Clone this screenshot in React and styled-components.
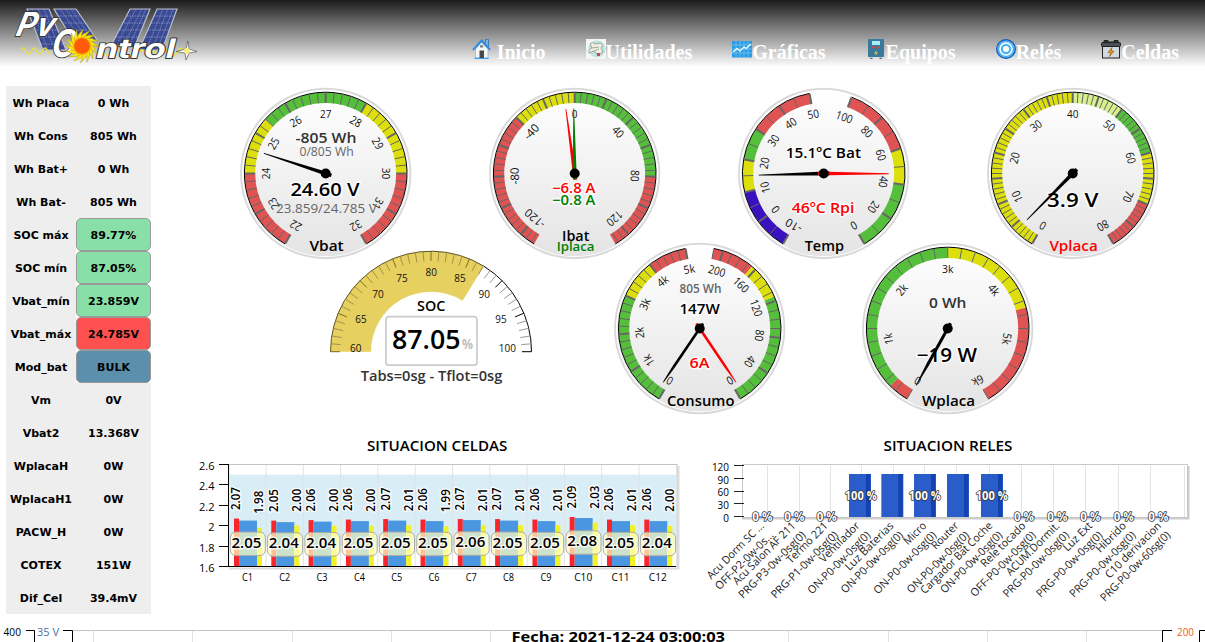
import React from "react";
import styled, { createGlobalStyle } from "styled-components";

const GlobalStyle = createGlobalStyle`
  * { box-sizing: border-box; }
  body { margin: 0; background: #fff; overflow: hidden; }
  svg { display: block; overflow: visible; }
`;

const Page = styled.div`
  width: 1205px;
  height: 642px;
  overflow: hidden;
  display: flex;
  flex-direction: column;
  background: #fff;
`;

const Header = styled.header`
  height: 67px;
  flex: none;
  display: flex;
  justify-content: space-between;
  padding-right: 26px;
  background: linear-gradient(#1c1c1c, #fff);
`;

const Nav = styled.nav`
  display: flex;
  gap: 40px;
  padding-top: 39px;
`;

const NavItem = styled.a`
  display: flex;
  align-items: flex-start;
  height: 22px;
  color: #fff;
  font: bold 20px/27px "Liberation Serif", serif;
  white-space: pre;

  svg { flex: none; }
`;

const Main = styled.main`
  height: 553px;
  flex: none;
  display: flex;
  padding: 16px 0 0 6px;
`;

const Sidebar = styled.aside`
  width: 145px;
  height: 528px;
  margin-top: 3px;
  flex: none;
`;

const StatRow = styled.div`
  display: grid;
  grid-template-columns: 70px 75px;
  height: 33px;
  font: bold 11px/35px "DejaVu Sans", sans-serif;
  text-align: center;
  color: #000;
`;

const StatLabel = styled.div`
  height: 33px;
  background: #eee;
  white-space: nowrap;
`;

const StatHolder = styled.div`
  height: 33px;
  background: ${(p) => (p.$plain ? "#eee" : "#fff")};
`;

const StatValue = styled.div`
  height: 33px;
  line-height: ${(p) => (p.$color ? "33px" : "35px")};
  border: ${(p) => (p.$color ? "1px solid #999" : "none")};
  border-radius: ${(p) => (p.$color ? "5px" : "0")};
  background: ${(p) => p.$color || "transparent"};
`;

const Content = styled.section`
  margin-left: 34px;
  width: 1020px;
`;

const GaugeRow = styled.div`
  display: grid;
  grid-template-columns: repeat(4, 249px);
  justify-items: center;
  height: 180px;
  margin-left: 16px;
`;

const LowerGaugeRow = styled.div`
  display: flex;
  gap: 68.5px;
  height: 180px;
  margin-top: -25px;
  padding-left: 136px;
`;

const ChartRow = styled.div`
  display: flex;
  margin-top: 12px;
`;

const Chart = styled.svg`
  width: ${(p) => p.$w}px;
  height: ${(p) => p.$h}px;
  flex: none;
  font-family: "Open Sans", "Noto Sans", sans-serif;
`;

const Footer = styled.footer`
  height: 22px;
  overflow: hidden;
`;

const RED = "#df5353";
const YELLOW = "#dddf0d";
const GREEN = "#55bf3b";

const polar = (r, deg) => {
  const a = (deg * Math.PI) / 180;
  return [r * Math.sin(a), -r * Math.cos(a)];
};

const arc = (r1, r2, a, b) => {
  const big = Math.abs(b - a) > 180 ? 1 : 0;
  const p = [polar(r1, a), polar(r1, b), polar(r2, b), polar(r2, a)];
  return `M${p[0]}A${r1},${r1} 0 ${big} 1 ${p[1]}L${p[2]}A${r2},${r2} 0 ${big} 0 ${p[3]}Z`;
};

const edge = (r, a, b) =>
  `M${polar(r, a)}A${r},${r} 0 ${Math.abs(b - a) > 180 ? 1 : 0} 1 ${polar(r, b)}`;

/* Text stretched between two x positions, with an optional halo. */
function Span({ x1, x2, y, size = 14.5, fill = "#000", weight = 600, halo, children }) {
  return (
    <text
      x={x1}
      y={y}
      textLength={x2 - x1}
      lengthAdjust="spacingAndGlyphs"
      fontSize={size}
      fontWeight={weight}
      fill={fill}
      stroke={halo ? "#fff" : "none"}
      strokeWidth={halo ? 3 : 0}
      strokeOpacity={0.8}
      strokeLinejoin="round"
      paintOrder="stroke"
    >
      {children}
    </text>
  );
}

function Scale({ from, to, a0, a1, bands, minor, major, labels, thin }) {
  const at = (v) => a0 + ((v - from) / (to - from)) * (a1 - a0);
  const ticks = [];
  const n = Math.round((to - from) / minor);
  const start = Math.ceil(from / minor) * minor;
  for (let i = 0; i <= n; i++) {
    const v = start + i * minor;
    if (v > to + 1e-6) break;
    const isMajor = Math.abs(v / major - Math.round(v / major)) < 1e-6;
    ticks.push({ v, isMajor });
  }
  const lo = Math.min(a0, a1);
  const hi = Math.max(a0, a1);
  return (
    <g>
      {bands.map(([s, e, c]) => (
        <path key={s} d={arc(81, 70.5, Math.min(at(s), at(e)), Math.max(at(s), at(e)))} fill={c} />
      ))}
      <path d={edge(81.3, lo, hi)} fill="none" stroke="#000" />
      {ticks.map(({ v, isMajor }) => {
        const [x1, y1] = polar(80.8, at(v));
        const [x2, y2] = polar(70.5, at(v));
        return (
          <line key={v} x1={x1} y1={y1} x2={x2} y2={y2} stroke="#666" strokeWidth={isMajor && !thin ? 2 : 1} />
        );
      })}
      {labels.map(([v, t]) => {
        const [x, y] = polar(60, at(v));
        return (
          <text
            key={v}
            transform={`translate(${x} ${y}) rotate(${at(v)})`}
            y="4"
            fontSize="11.5"
            textAnchor="middle"
            fill="#111"
            textLength={t.length * 5.7}
            lengthAdjust="spacingAndGlyphs"
          >
            {t}
          </text>
        );
      })}
    </g>
  );
}

function Needle({ angle, color = "#000", base = 5, half = 1.8 }) {
  return (
    <path
      transform={`rotate(${angle})`}
      d={`M-${half},6L-${half},-${base}L-0.4,-65L0.4,-65L${half},-${base}L${half},6Z`}
      fill={color}
    />
  );
}

function Gauge({ scales, needles, front }) {
  return (
    <Chart $w={180} $h={180}>
      <defs>
        <linearGradient id="plate" x1="0" y1="0" x2="0" y2="1">
          <stop offset="0" stopColor="#fff" />
          <stop offset="1" stopColor="#e4e4e4" />
        </linearGradient>
      </defs>
      <g transform="translate(89.7 90.5)">
        <circle r="84.7" fill="#fff" stroke="#d9d9d9" strokeWidth="1.9" />
        <circle r="82.8" fill="url(#plate)" />
        {scales.map((s) => (
          <Scale key={s.a0} {...s} />
        ))}
        {front}
        {needles.map((n) => (
          <Needle key={n.angle} {...n} />
        ))}
        <circle r="5" fill="#000" />
      </g>
    </Chart>
  );
}

const seq = (a, b, s, f = String) => {
  const out = [];
  for (let v = a; v <= b; v += s) out.push([v, f(v)]);
  return out;
};
const kilo = (v) => (v === 0 ? "0" : `${v / 1000}k`);

function Vbat() {
  return (
    <Gauge
      scales={[{
        from: 22, to: 32, a0: -150, a1: 150, minor: 0.2, major: 1, labels: seq(22, 32, 1),
        bands: [[22, 24, RED], [24, 25.4, YELLOW], [25.4, 28, GREEN], [28, 30, YELLOW], [30, 32, RED]],
      }]}
      needles={[{ angle: -72 }]}
      front={
        <>
          <Span x1={-30.3} x2={30.7} y={-31} fill="#333">-805 Wh</Span>
          <Span x1={-26.3} x2={28} y={-17.7} size={12} fill="#666" weight={500}>0/805 Wh</Span>
          <Span x1={-35.3} x2={33.7} y={22} size={18} halo>24.60 V</Span>
          <Span x1={-49.7} x2={51} y={39} size={12} fill="#666" weight={400}>23.859/24.785 V</Span>
          <Span x1={-16.3} x2={18} y={77}>Vbat</Span>
        </>
      }
    />
  );
}

function Ibat() {
  return (
    <Gauge
      scales={[{
        from: -130, to: 130, a0: -150, a1: 150, minor: 4, major: 20, labels: seq(-120, 120, 40),
        bands: [[-130, -40, RED], [-40, 0, YELLOW], [0, 80, GREEN], [80, 130, RED]],
      }]}
      needles={[{ angle: -7.8, color: "#f00" }, { angle: -0.9, color: "green" }]}
      front={
        <>
          <Span x1={-22.7} x2={20.7} y={19.7} size={14} fill="#f00" halo>−6.8 A</Span>
          <Span x1={-22.7} x2={20.7} y={31.3} size={14} fill="green" halo>−0.8 A</Span>
          <Span x1={-12.7} x2={14.7} y={67.3}>Ibat</Span>
          <Span x1={-18} x2={19.7} y={77} size={12.5} fill="green">Iplaca</Span>
        </>
      }
    />
  );
}

function Temp() {
  return (
    <Gauge
      scales={[
        {
          from: -10, to: 50, a0: -150, a1: -10, minor: 5, major: 10, labels: seq(-10, 50, 10),
          bands: [[-10, 10, "#3a11bf"], [10, 20, YELLOW], [20, 30, GREEN], [30, 50, RED]],
        },
        {
          from: 0, to: 100, a0: 150, a1: 20, minor: 10, major: 20, labels: seq(0, 100, 20),
          bands: [[0, 40, GREEN], [40, 60, YELLOW], [60, 100, RED]],
        },
      ]}
      needles={[{ angle: -91.4 }, { angle: 90.2, color: "#f00" }]}
      front={
        <>
          <Span x1={-38} x2={37.3} y={-15.3} size={15} halo>15.1ºC Bat</Span>
          <Span x1={-32} x2={30.7} y={39.7} size={15} fill="#f00" halo>46ºC Rpi</Span>
          <Span x1={-19} x2={20.3} y={77}>Temp</Span>
        </>
      }
    />
  );
}

function Vplaca() {
  return (
    <Gauge
      scales={[{
        from: 0, to: 80, a0: -150, a1: 150, minor: 1, major: 5, labels: seq(0, 80, 10),
        bands: [[0, 40, YELLOW], [40, 50, "#d5f08c"], [50, 60, GREEN], [60, 70, YELLOW], [70, 80, RED]],
      }]}
      needles={[{ angle: -135.4 }]}
      front={
        <>
          <Span x1={-25.7} x2={25.7} y={33.7} size={19} halo>3.9 V</Span>
          <Span x1={-23.3} x2={25} y={77} fill="#f00">Vplaca</Span>
        </>
      }
    />
  );
}

function Consumo() {
  return (
    <Gauge
      scales={[
        {
          from: 0, to: 5000, a0: -150, a1: -10, minor: 200, major: 1000, labels: seq(0, 5000, 1000, kilo),
          bands: [[0, 3000, GREEN], [3000, 4000, YELLOW], [4000, 5000, RED]],
        },
        {
          from: 0, to: 210, a0: 150, a1: 10, minor: 10, major: 40, labels: seq(0, 200, 40),
          bands: [[0, 125, GREEN], [125, 165, YELLOW], [165, 210, RED]],
        },
      ]}
      needles={[{ angle: 146, color: "#f00", base: 46, half: 1.3 }, { angle: -145.9, base: 46, half: 1.3 }]}
      front={
        <>
          <Span x1={-20.3} x2={21.7} y={-35.3} size={12} fill="#666">805 Wh</Span>
          <Span x1={-20.3} x2={20} y={-15} halo>147W</Span>
          <Span x1={-10.3} x2={9.7} y={39.7} fill="#f00" halo>6A</Span>
          <Span x1={-32.7} x2={34.7} y={77}>Consumo</Span>
        </>
      }
    />
  );
}

function Wplaca() {
  return (
    <Gauge
      scales={[{
        from: 0, to: 6000, a0: -150, a1: 150, minor: 200, major: 1000, thin: true, labels: seq(0, 6000, 1000, kilo),
        bands: [[0, 300, RED], [300, 3000, GREEN], [3000, 4500, YELLOW], [4500, 6000, RED]],
      }]}
      needles={[{ angle: -151, base: 40, half: 1.5 }]}
      front={
        <>
          <Span x1={-18.7} x2={18.7} y={-21} fill="#333">0 Wh</Span>
          <Span x1={-31} x2={29.3} y={33.7} size={19} halo>−19 W</Span>
          <Span x1={-25.7} x2={27.3} y={77}>Wplaca</Span>
        </>
      }
    />
  );
}

const SOC_LABELS = [
  [60, -75.3, -3.7], [65, -70, -32.7], [70, -53, -57.7], [75, -29, -73.3], [80, 0.3, -79.3],
  [85, 29, -73.3], [90, 53.3, -57.7], [95, 70, -32.7], [100, 76.3, -3.7],
];

function Soc() {
  const level = 31.7;
  return (
    <Chart $w={220} $h={180}>
      <g transform="translate(110 113.7)">
        <path d={arc(100.5, 60, -90, level)} fill="#e6d05f" />
        <path d={edge(100.5, -90, level)} fill="none" stroke="#5c5326" />
        <path d={edge(100.5, level, 90)} fill="none" stroke="#000" />
        {Array.from({ length: 41 }, (_, i) => {
          const a = -90 + i * 4.5;
          const major = i % 5 === 0;
          const [x1, y1] = polar(100.5, a);
          const [x2, y2] = polar(major ? 91 : 90.5, a);
          const onBand = a < level;
          const color = onBand ? (major ? "#7a6c20" : "#a2934a") : major ? "#000" : "#999";
          return <line key={i} x1={x1} y1={y1} x2={x2} y2={y2} stroke={color} />;
        })}
        {SOC_LABELS.map(([v, x, y]) => (
          <text key={v} x={x} y={y + 4} fontSize="11.5" textAnchor="middle" fill="#111"
            textLength={String(v).length * 5.7} lengthAdjust="spacingAndGlyphs">{v}</text>
        ))}
        <Span x1={-14} x2={14.3} y={-41}>SOC</Span>
        <rect x="-45" y="-35" width="91" height="48.5" rx="3" fill="#fff" stroke="#ccc" strokeWidth="1.7" />
        <Span x1={-39} x2={29.5} y={-2.7} size={26.5}>87.05</Span>
        <Span x1={30.7} x2={42} y={-2.7} size={15} weight={700} fill="#c0c0c0">%</Span>
        <Span x1={-70.3} x2={71.3} y={29.3} size={14} fill="#333">Tabs=0sg - Tflot=0sg</Span>
      </g>
    </Chart>
  );
}

/* bar heights (max, mean, min), then the printed mean, max and min where they are rounded apart */
const CELLS = [
  [2.07, 2.05, 1.98], [2.05, 2.035, 2.0, 2.04], [2.055, 2.04, 2.0, 2.04, 2.06], [2.06, 2.045, 2.0, 2.05],
  [2.065, 2.05, 2.005, 2.05, 2.07, 2.01], [2.06, 2.045, 1.995, 2.05, 2.06, 1.99], [2.065, 2.055, 2.005, 2.06, 2.07, 2.01],
  [2.065, 2.05, 2.005, 2.05, 2.07, 2.01], [2.06, 2.045, 2.005, 2.05, 2.06, 2.01], [2.085, 2.075, 2.03, 2.08, 2.09, 2.03],
  [2.06, 2.045, 2.005, 2.05, 2.06, 2.01], [2.06, 2.045, 2.0, 2.04],
];

function Celdas() {
  const L = 43.7;
  const B = 136.5;
  const step = 37.3;
  const y = (v) => B - (v - 1.6) * 102;
  const label = (x, yy, t) => (
    <text transform={`translate(${x} ${yy}) rotate(-90)`} fontSize="12.5" textLength="23" lengthAdjust="spacingAndGlyphs"
      stroke="#fff" strokeWidth="3" strokeOpacity="0.85" paintOrder="stroke" strokeLinejoin="round" fontWeight="600">{t}</text>
  );
  return (
    <Chart $w={510} $h={172}>
      <Span x1={182} x2={322.3} y={20.7} size={14}>SITUACION CELDAS</Span>
      <path d="M493.5,36V138.5H44" fill="none" stroke="#ddd" strokeWidth="2" />
      <rect x={L} y="34.5" width="448.3" height="102" fill="#fff" stroke="#c4c4c4" />
      <rect x={L} y={y(2.5)} width="447.5" height={y(1.8) - y(2.5)} fill="#d9edf7" />
      {Array.from({ length: 11 }, (_, i) => (
        <line key={i} x1={L + step * (i + 1)} x2={L + step * (i + 1)} y1="35" y2="136" stroke="#e2e2e2" />
      ))}
      {CELLS.map(([hi, mid, lo], i) => {
        const x = 49 + i * step;
        return (
          <g key={i}>
            <rect x={x} y={y(hi)} width="5" height={B - y(hi)} fill="#f8262b" />
            <rect x={x + 5} y={y(mid)} width="18" height={B - y(mid)} fill="#4a96e0" />
            <rect x={x + 23} y={y(lo)} width="5" height={B - y(lo)} fill="#f3f025" />
          </g>
        );
      })}
      <path d="M34,136.5H491M43.5,34V137" stroke="#000" fill="none" />
      {["2.6", "2.4", "2.2", "2", "1.8", "1.6"].map((t, i) => (
        <g key={t}>
          <line x1="34" x2="44" y1={34.5 + Math.round(i * 20.4)} y2={34.5 + Math.round(i * 20.4)} stroke="#000" />
          <text x="29.5" y={40 + i * 20.4} fontSize="11" textAnchor="end">{t}</text>
        </g>
      ))}
      {CELLS.map(([hi, mid, lo, tMid = mid, tHi = hi, tLo = lo], i) => {
        const x = 49 + i * step;
        const cy = (y(mid) + B) / 2;
        return (
          <g key={i}>
            {label(x + 6.3, y(hi) - 8.5, tHi.toFixed(2))}
            {label(x + 29.3, y(lo) - 14, tLo.toFixed(2))}
            <rect x={x - 3.7} y={cy - 11.5} width="35" height="23.5" rx="5.5" fill="#ffffc0" fillOpacity="0.72" stroke="#aaa" />
            <Span x1={x - 2.5} x2={x + 27.5} y={cy + 4} size={14.5} halo>{tMid.toFixed(2)}</Span>
            <text x={x + 13.5} y="151" fontSize="11" textAnchor="middle"
              textLength={i < 9 ? 11 : 18} lengthAdjust="spacingAndGlyphs">{`C${i + 1}`}</text>
          </g>
        );
      })}
    </Chart>
  );
}

/* name with its left and right x, then the mode line with its left and right x (thirds of a pixel) */
const RELAYS = [
  ["Acu Dorm SC ...", 40, 203, "OFF-P2-0w-0s...", 65, 232],
  ["Acu Salon AF 211", 118, 298, "PRG-P3-0w-0sg(0)", 135, 328],
  ["Termo 221", 280, 395, "PRG-P1-0w-0sg(0)", 232, 425],
  ["Ventilador", 378, 490, "ON-P0-0w-0sg(0)", 342, 522],
  ["Luz Baterias", 455, 592, "ON-P0-0w-0sg(0)", 442, 620],
  ["Micro", 632, 690, "ON-P0-0w-0sg(0)", 540, 720],
  ["Router", 715, 787, "ON-P0-0w-0sg(0)", 640, 818],
  ["Cargador Bat Coche", 680, 888, "ON-P0-0w-0sg(0)", 740, 918],
  ["Rele tocado", 862, 988, "OFF-P0-0w-0sg(0)", 830, 1018],
  ["ACUM.Dormit.", 938, 1090, "PRG-P0-0w-0sg(0)", 928, 1118],
  ["Luz Ext", 1110, 1188, "PRG-P0-0w-0sg(0)", 1028, 1218],
  ["Hibrido", 1208, 1290, "PRG-P0-0w-0sg(0)", 1128, 1318],
  ["C10 derivacion", 1235, 1395, "PRG-P0-0w-60sg(0)", 1220, 1422],
];

function Tilted({ x1, x2, y2, children }) {
  return (
    <text
      transform={`translate(${x2 / 3 + 2} ${y2 / 3 + 1.8}) rotate(-45)`}
      fontSize="11"
      textAnchor="end"
      textLength={((x2 - x1) / 3) * 1.39}
      lengthAdjust="spacingAndGlyphs"
      fill="#222"
    >
      {children}
    </text>
  );
}

function Reles() {
  const grid = [217, 311, 404, 499, 593, 688, 782, 881, 977, 1073, 1169, 1269, 1366, 1468];
  const bars = [462, 559, 657, 756, 858];
  const zero = [202, 298, 395, 987, 1087, 1186, 1286, 1390];
  const tag = (cx, y, t, w) => (
    <text key={cx} x={cx / 3} y={y} textAnchor="middle" fontSize="12.5" fontWeight="700" fill="#fff" stroke="#333"
      strokeWidth="1.6" paintOrder="stroke" strokeLinejoin="round" textLength={w} lengthAdjust="spacingAndGlyphs">{t}</text>
  );
  return (
    <Chart $w={510} $h={172}>
      <Span x1={188.5} x2={317.5} y={20.7} size={14}>SITUACION RELES</Span>
      <path d="M493.5,36V88.5H47" fill="none" stroke="#ccc" strokeWidth="2" />
      <rect x="47.5" y="34.5" width="445" height="53" fill="#fff" stroke="#c8c8c8" />
      {grid.map((x) => (
        <line key={x} x1={Math.round(x / 3) + 0.5} x2={Math.round(x / 3) + 0.5} y1="36" y2="87" stroke="#e4e4e4" />
      ))}
      {["120", "90", "60", "30", "0"].map((t, i) => (
        <g key={t}>
          <line x1="39" x2="49" y1={35.5 + Math.round(i * 12.8)} y2={35.5 + Math.round(i * 12.8)} stroke="#222" />
          <text x="34" y={41 + i * 12.7} fontSize="11" textAnchor="end" textLength={t.length * 5.7} lengthAdjust="spacingAndGlyphs">{t}</text>
        </g>
      ))}
      {bars.map((x) => (
        <g key={x}>
          <rect x={x / 3} y="44" width="22" height="43" fill="#2a5dc9" />
          <rect x={x / 3 + 17} y="44" width="4.3" height="43" fill="#1243b0" />
        </g>
      ))}
      {zero.map((x) => (
        <line key={x} x1={x / 3 - 4} x2={x / 3 + 11} y1="87" y2="87" stroke="#2a5dc9" strokeWidth="1.3" />
      ))}
      {RELAYS.map(([a, ax, aex, b, bx, bex]) => (
        <g key={a}>
          <Tilted x1={ax} x2={aex} y2={284}>{a}</Tilted>
          <Tilted x1={bx} x2={bex} y2={312}>{b}</Tilted>
        </g>
      ))}
      {[497, 689, 890].map((x) => tag(x, 70.3, "100 %", 32))}
      {zero.map((x) => tag(x, 91.3, "0 %", 20))}
    </Chart>
  );
}

function Trend() {
  return (
    <Chart $w={1205} $h={22}>
      <line x1="73" x2="1163" y1="10.5" y2="10.5" stroke="#c4c4c4" />
      {[93, 192, 292, 391, 490, 590, 689, 788, 888, 987, 1086].map((x) => (
        <line key={x} x1={x + 0.5} x2={x + 0.5} y1="11" y2="22" stroke="#e2e2e2" />
      ))}
      <Span x1={3.5} x2={21} y={16} size={11} weight={400}>400</Span>
      <path d="M26,10.5H34.5V22M63,10.5H72.5V22M1172,10.5H1162.5V22M1205,10.5H1199.5V22" fill="none" stroke="#000" />
      <Span x1={37} x2={59} y={16} size={11} weight={400} fill="#4572a7">35 V</Span>
      <Span x1={1177} x2={1194} y={16} size={11} weight={400} fill="#f15c22">200</Span>
      <Span x1={511.5} x2={725} y={22} size={14.5} weight={700}>Fecha: 2021-12-24 03:00:03</Span>
    </Chart>
  );
}

function Panel({ points, lines }) {
  return (
    <g>
      <polygon points={points} fill="#3a4a92" stroke="#b9bdc9" strokeWidth="1.2" />
      <path d={lines} stroke="#a9b4dc" strokeWidth="0.6" strokeDasharray="1.5 1" fill="none" />
    </g>
  );
}

function Logo() {
  const rays = Array.from({ length: 16 }, (_, i) => i * 22.5);
  return (
    <Chart $w={205} $h={67}>
      <Panel points="27,9 49,9 66,50 43,50" lines="M32,9L48,50M38,9L55,50M44,9L60,50M29,16H52M32,23H55M35,30H58M38,37H61M41,44H64" />
      <Panel points="54,9 76,9 97,40 78,45 68,32" lines="M60,9L83,42M66,9L88,40M71,9L93,40M58,16H80M63,23H86M68,30H91M74,37H95" />
      <Panel points="130,9 150,9 134,48 112,44" lines="M136,9L118,42M142,9L124,44M146,9L129,46M127,16H147M124,23H144M120,30H141M116,37H138" />
      <Panel points="157,9 177,9 162,50 139,50" lines="M163,9L146,50M168,9L152,50M173,9L157,50M154,16H175M151,23H172M147,30H170M144,37H167M141,44H164" />
      <path
        d="M21,50q2,-4 4,0t3.5,4t3.5,-4t4,0t3.5,4t3.5,-4t4,0t3.5,4M98,52q3,-6 6,0t6,2t5,-4t6,2t6,2M140,52q2,-5 4,0t4,2t4,-3t4,2t4,2t5,-4t5,2t5,2t5,-6t4,2"
        fill="none" stroke="#e8e03a" strokeWidth="1.3"
      />
      <g fontFamily="Inter, sans-serif" fontWeight="700" fill="#fff" stroke="#333" strokeWidth="1.8" paintOrder="stroke" strokeLinejoin="round">
        <g transform="translate(13.5 35.5) skewX(-22)">
          <text fontSize="33" textLength="38" lengthAdjust="spacingAndGlyphs">Pv</text>
        </g>
        <g transform="translate(49.5 57) skewX(-14)">
          <text fontSize="38" textLength="24" lengthAdjust="spacingAndGlyphs">C</text>
        </g>
        <g transform="translate(94.5 57.5) skewX(-14)">
          <text fontSize="27" textLength="79" lengthAdjust="spacingAndGlyphs">ntrol</text>
        </g>
      </g>
      <g transform="translate(82 46)">
        {rays.map((r) => (
          <path key={r} transform={`rotate(${r})`} d="M-4,-7Q1,-13 8,-15Q2,-10 3,-6Z" fill="#f8ea12" stroke="#b98e00" strokeWidth="0.4" />
        ))}
        <circle r="8.3" fill="#ff5a08" stroke="#ffae00" strokeWidth="1" />
      </g>
      <path d="M188,41L189,49L197,51.5L189,53L186,60L185,53L176,51.5L186,49Z" fill="#fff" stroke="#555" strokeWidth="0.7" />
      <circle cx="187" cy="51" r="3" fill="#f6ef7a" />
    </Chart>
  );
}

const HomeIcon = () => (
  <svg width="20" height="21" viewBox="0 0 20 21">
    <path d="M13.5,0.5h3v7h-3z" fill="#7fb2e0" stroke="#2f6fb5" strokeWidth="0.8" />
    <path d="M3.5,10L9.5,3.5L16,10V19.5H3.5Z" fill="#f4f6f8" stroke="#8fb0cc" strokeWidth="0.7" />
    <path d="M1,10.8L9.7,1.5L18.2,10.8" fill="none" stroke="#2a8be0" strokeWidth="1.9" />
    <path d="M2.5,19.3H16.5" stroke="#3f9fe8" strokeWidth="1.4" />
    <rect x="7.5" y="11.5" width="4.5" height="7.5" fill="#4a4a4a" />
    <rect x="8" y="6" width="3.2" height="2.6" fill="#888" />
  </svg>
);
const ToolsIcon = () => (
  <svg width="20" height="20" viewBox="0 0 20 20">
    <rect width="20" height="20" fill="#f3f4f3" />
    <circle cx="11" cy="10" r="8.5" fill="#bfe2dc" />
    <path d="M4,5Q6,2 9,5L15,4Q18,6 15,9L17,13L12,16L8,12L3,14Q2,10 6,9Z" fill="#f1efe3" stroke="#8a9589" strokeWidth="0.8" />
    <path d="M6,9L13,8M8,12L13,10" stroke="#8a9589" strokeWidth="0.8" />
    <rect x="11" y="14" width="3" height="3" fill="#c9474d" />
  </svg>
);
const GraphIcon = () => (
  <svg width="20" height="20" viewBox="0 0 20 20">
    <rect y="2" width="20" height="16.5" fill="#2b9be3" />
    <path d="M0,6H20M0,10H20M0,14H20M4,2V18M8,2V18M12,2V18M16,2V18" stroke="#7ccaf5" strokeWidth="0.7" />
    <path d="M1,13L5,9.5L8,12L12,8L14,9.5L19,5" fill="none" stroke="#fff" strokeWidth="1.2" />
  </svg>
);
const InverterIcon = () => (
  <svg width="20" height="20" viewBox="0 0 20 20">
    <rect x="2" width="16" height="18" rx="0.8" fill="#39799c" />
    <rect x="6" y="2" width="8" height="4" fill="#a7ecf5" />
    <path d="M6,8.5H9M11,8.5H14" stroke="#f0432b" strokeWidth="1.5" />
    <path d="M10.5,11L8,14.5H10L9.3,17L12,13.5H10Z" fill="#f3c83a" />
    <path d="M4,19.3H6.5M13.5,19.3H16" stroke="#2c566d" strokeWidth="1" />
  </svg>
);
const RelayIcon = () => (
  <svg width="20" height="20" viewBox="0 0 20 20">
    <circle cx="10" cy="10" r="9.4" fill="#4bb4f1" stroke="#1c55b5" strokeWidth="1.2" />
    <circle cx="10" cy="10" r="6" fill="none" stroke="#fff" strokeWidth="1.5" />
    <circle cx="10" cy="10" r="3" fill="#fff" />
  </svg>
);
const BatteryIcon = () => (
  <svg width="20" height="20" viewBox="0 0 20 20">
    <path d="M3,4V1.5H7V3H13V1.5H17V4Z" fill="#333" stroke="#222" />
    <rect x="0.5" y="3.5" width="19" height="4" rx="1" fill="#4c4f58" stroke="#222" />
    <rect x="1.5" y="7.5" width="17" height="11.5" fill="#d4d8df" stroke="#222" />
    <path d="M11,8.5L7,13.5H10L8.5,17.5L13,12H10Z" fill="#f2a91c" stroke="#7a4a00" strokeWidth="0.6" />
  </svg>
);

const NAV = [
  [HomeIcon, " Inicio"], [ToolsIcon, "Utilidades"], [GraphIcon, "Gráficas"],
  [InverterIcon, "Equipos"], [RelayIcon, "Relés"], [BatteryIcon, "Celdas"],
];

const STATS = [
  ["Wh Placa", "0 Wh"], ["Wh Cons", "805 Wh"], ["Wh Bat+", "0 Wh"], ["Wh Bat-", "805 Wh"],
  ["SOC máx", "89.77%", "#88dfa8"], ["SOC mín", "87.05%", "#88dfa8"], ["Vbat_mín", "23.859V", "#88dfa8"],
  ["Vbat_máx", "24.785V", "#ff5050"], ["Mod_bat", "BULK", "#5b8fac"],
  ["Vm", "0V"], ["Vbat2", "13.368V"], ["WplacaH", "0W"], ["WplacaH1", "0W"],
  ["PACW_H", "0W"], ["COTEX", "151W"], ["Dif_Cel", "39.4mV"],
];

export default function App() {
  return (
    <Page>
      <GlobalStyle />
      <Header>
        <Logo />
        <Nav>
          {NAV.map(([Icon, label]) => (
            <NavItem key={label}>
              <Icon />
              {label}
            </NavItem>
          ))}
        </Nav>
      </Header>
      <Main>
        <Sidebar>
          {STATS.map(([label, value, color]) => (
            <StatRow key={label}>
              <StatLabel>{label}</StatLabel>
              <StatHolder $plain={!color}>
                <StatValue $color={color}>{value}</StatValue>
              </StatHolder>
            </StatRow>
          ))}
        </Sidebar>
        <Content>
          <GaugeRow>
            <Vbat />
            <Ibat />
            <Temp />
            <Vplaca />
          </GaugeRow>
          <LowerGaugeRow>
            <Soc />
            <Consumo />
            <Wplaca />
          </LowerGaugeRow>
          <ChartRow>
            <Celdas />
            <Reles />
          </ChartRow>
        </Content>
      </Main>
      <Footer>
        <Trend />
      </Footer>
    </Page>
  );
}
